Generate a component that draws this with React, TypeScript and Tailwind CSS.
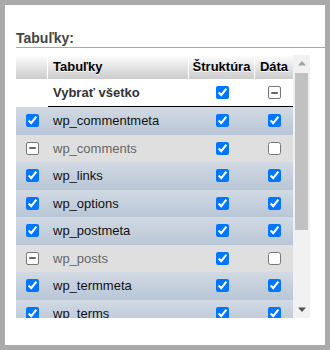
type Row = { name: string; pick: 'on' | 'mixed'; data: boolean }

const rows: Row[] = [
  { name: 'wp_commentmeta', pick: 'on', data: true },
  { name: 'wp_comments', pick: 'mixed', data: false },
  { name: 'wp_links', pick: 'on', data: true },
  { name: 'wp_options', pick: 'on', data: true },
  { name: 'wp_postmeta', pick: 'on', data: true },
  { name: 'wp_posts', pick: 'mixed', data: false },
  { name: 'wp_termmeta', pick: 'on', data: true },
  { name: 'wp_terms', pick: 'on', data: true },
]

function Box({ checked, mixed }: { checked?: boolean; mixed?: boolean }) {
  // čiastočne vybraté: sivý rámik s pomlčkou
  if (mixed) {
    return (
      <span className="w-[13px] h-[13px] rounded-[2px] border border-[#767676] bg-white flex items-center justify-center">
        <span className="w-[7px] h-[2px] rounded-[1px] bg-[#666]" />
      </span>
    )
  }
  return (
    <input
      type="checkbox"
      readOnly
      checked={!!checked}
      className="m-0 w-[13px] h-[13px]"
    />
  )
}

export default function App() {
  return (
    <div className="w-[330px] h-[350px] bg-[#aaaaaa] p-[5px] font-['Liberation_Sans',Arial,sans-serif]">
      <div className="bg-white h-full pl-[11px] pt-[25px]">
        <div className="h-[18px] leading-[17px] border-b border-[#aaaaaa] text-[14px] font-bold text-[#444]">
          Tabuľky:
        </div>

        <div className="mt-[7px] flex h-[263px]">
          <div className="w-[277px] overflow-hidden text-[13px]">
            {/* hlavička */}
            <div className="grid grid-cols-[32px_141px_66px_38px] h-[24px] font-bold text-black [text-shadow:0_1px_0_#fff]">
              <div className="bg-gradient-to-b from-white to-[#cccccc] border-r border-white" />
              <div className="bg-gradient-to-b from-white to-[#cccccc] border-r border-white flex items-center px-[5px]">Tabuľky</div>
              <div className="bg-gradient-to-b from-white to-[#cccccc] border-r border-white flex items-center justify-center">Štruktúra</div>
              <div className="bg-gradient-to-b from-white to-[#cccccc] flex items-center justify-center">Dáta</div>
            </div>

            <div className="grid grid-cols-[32px_141px_66px_38px] h-[28px] font-bold text-[#333]">
              <div />
              <div className="border-b border-black flex items-center px-[5px]">Vybrať všetko</div>
              <div className="border-b border-black flex items-center justify-center">
                <Box checked />
              </div>
              <div className="border-b border-black flex items-center justify-center">
                <Box mixed />
              </div>
            </div>

            {rows.map((r) => {
              const marked = r.pick === 'on'
              return (
                <div
                  key={r.name}
                  className={
                    marked
                      ? 'grid grid-cols-[32px_141px_66px_38px] h-[27.5px] bg-gradient-to-b from-[#d2dae3] to-[#b8c6d6] text-[#111]'
                      : 'grid grid-cols-[32px_141px_66px_38px] h-[27.5px] bg-[#dfdfdf] text-[#666]'
                  }
                >
                  <div className="flex items-center justify-center">
                    <Box checked={marked} mixed={!marked} />
                  </div>
                  <div className="flex items-center px-[5px]">{r.name}</div>
                  <div className="flex items-center justify-center">
                    <Box checked />
                  </div>
                  <div className="flex items-center justify-center">
                    <Box checked={r.data} />
                  </div>
                </div>
              )
            })}
          </div>

          {/* scrollbar */}
          <div className="w-[17px] bg-[#f1f1f1] flex flex-col">
            <div className="h-[17px] flex items-center justify-center">
              <svg width="8" height="5" viewBox="0 0 8 5">
                <path d="M4 0 L8 4.5 L0 4.5 Z" fill="#a3a3a3" />
              </svg>
            </div>
            <div className="flex-1 px-[2px] pt-[1px]">
              <div className="h-[157px] bg-[#c1c1c1]" />
            </div>
            <div className="h-[17px] flex items-center justify-center">
              <svg width="8" height="5" viewBox="0 0 8 5">
                <path d="M0 0.5 L8 0.5 L4 5 Z" fill="#505050" />
              </svg>
            </div>
          </div>
        </div>
      </div>
    </div>
  )
}
